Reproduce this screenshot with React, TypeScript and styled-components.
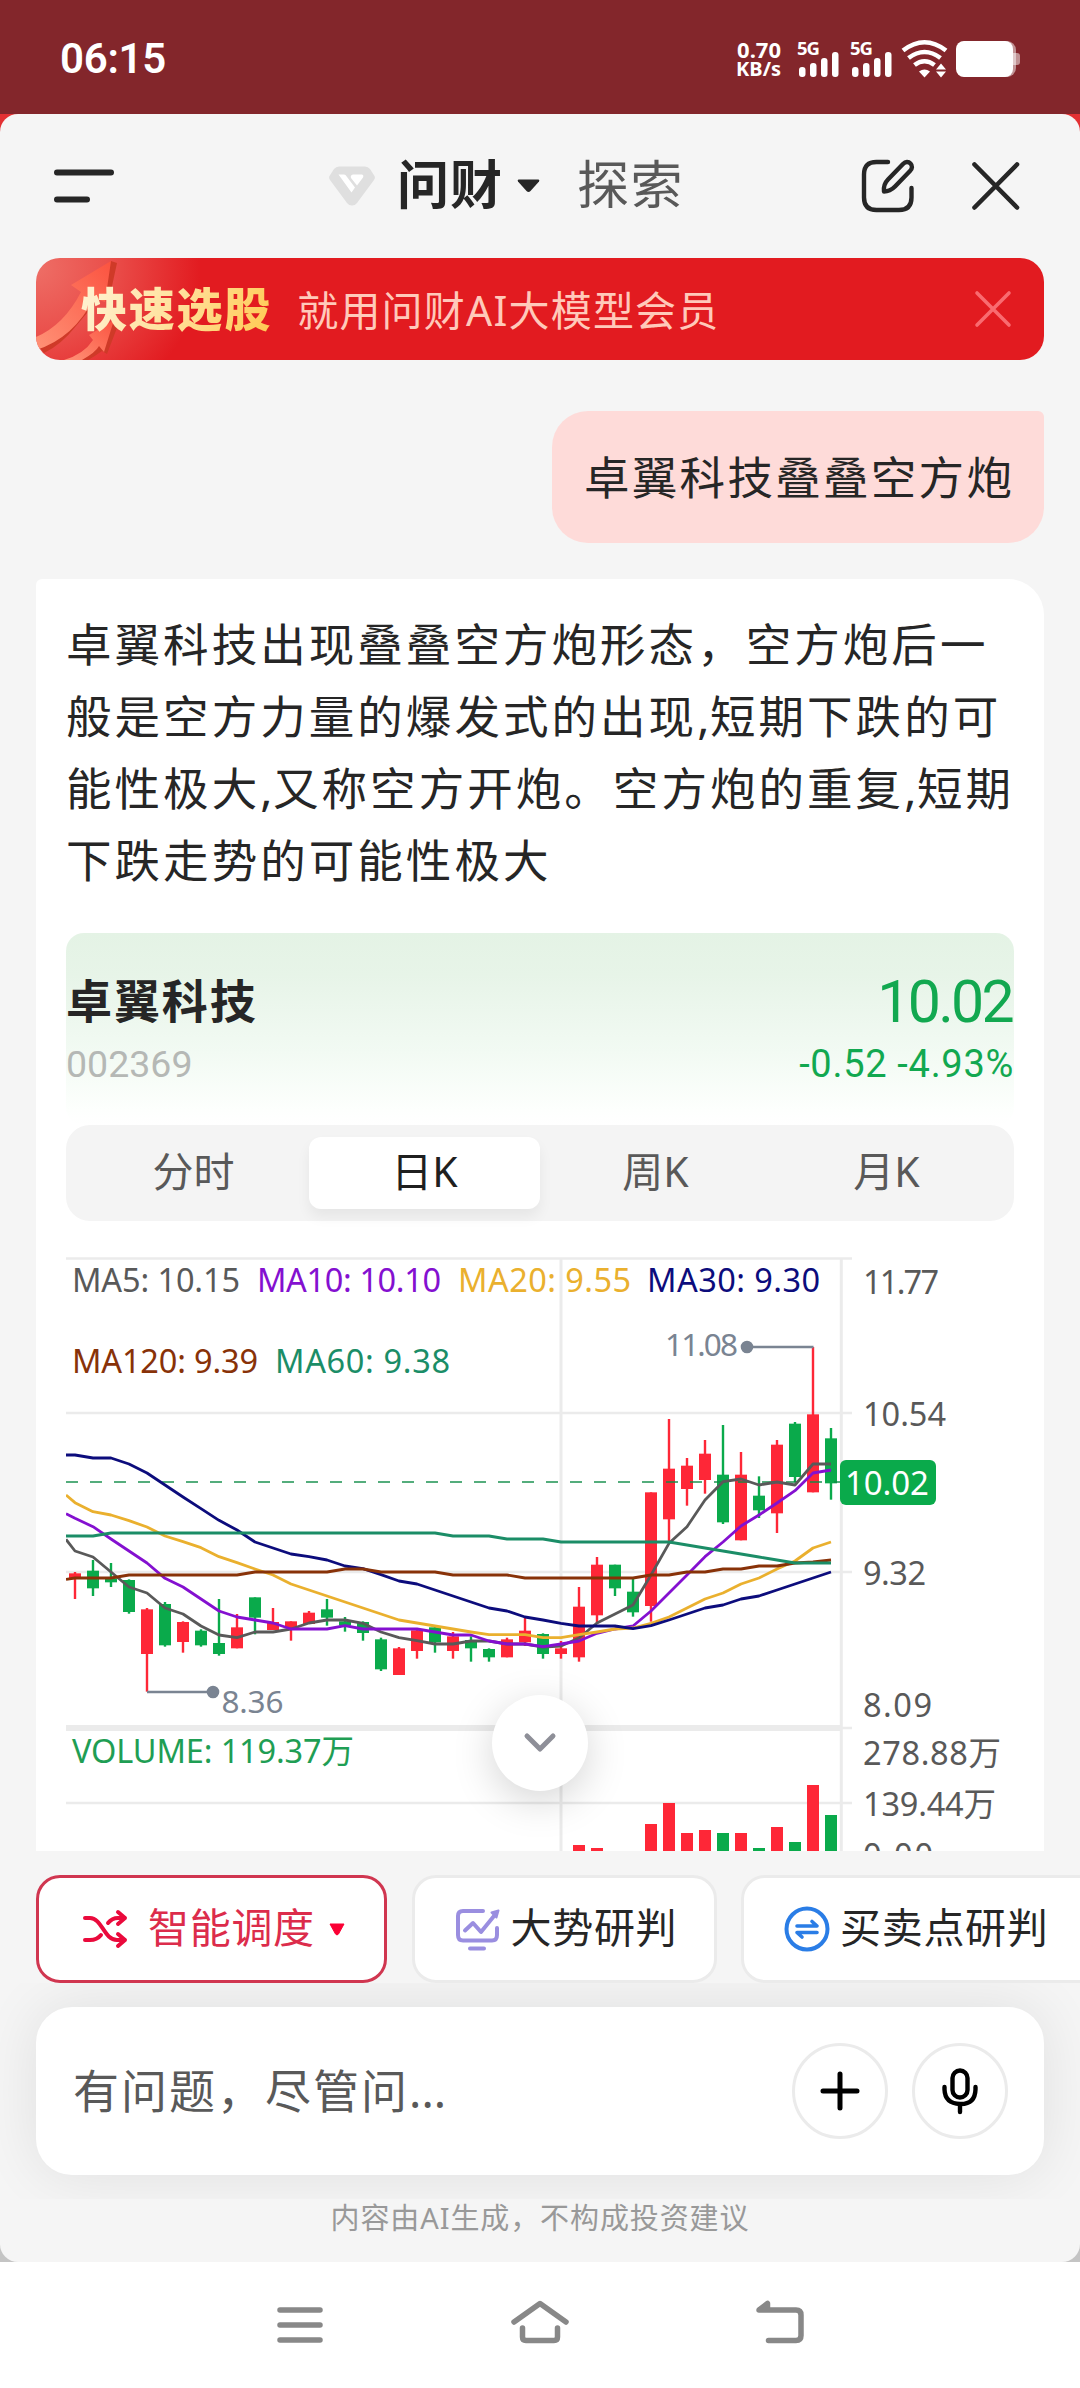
import React from "react";
import styled, { createGlobalStyle } from "styled-components";

const SANS = '"Noto Sans", "Noto Sans CJK SC", sans-serif';
const NUM = 'Roboto, "Noto Sans CJK SC", sans-serif';

const RED = "#fe2737";
const GREEN = "#0aaa4b";

const GlobalStyle = createGlobalStyle`
  * { box-sizing: border-box; }
  body { margin: 0; background: #fff; }
`;

const Screen = styled.div`
  width: 1080px;
  height: 2388px;
  display: flex;
  flex-direction: column;
  background: #fff;
  overflow: hidden;
  font-family: ${SANS};
  color: #262626;
  white-space: nowrap;
`;

/* ---------- status bar ---------- */

const StatusBar = styled.header`
  height: 114px;
  flex: none;
  display: flex;
  align-items: center;
  justify-content: space-between;
  padding: 4px 60px 0 60px;
  background: #83262b;
  color: #fff;
`;

const Clock = styled.span`
  font: 600 42px/42px ${NUM};
  letter-spacing: -0.3px;
`;

const StatusRight = styled.div`
  display: flex;
  align-items: center;
`;

const Speed = styled.div`
  display: flex;
  flex-direction: column;
  align-items: flex-end;
  margin-right: 16px;
  font: 700 20px/20px ${SANS};
  & > :first-child { font-size: 22px; }
`;

const StatusGlyphs = styled.svg`
  display: block;
  width: 223px;
  height: 56px;
`;

/* ---------- sheet ---------- */

const SheetBack = styled.div`
  flex: none;
  height: 2148px;
  background: linear-gradient(#e33033 0 50%, #c4c4c4 50%);
`;

const Sheet = styled.main`
  height: 2148px;
  display: flex;
  flex-direction: column;
  border-radius: 18px;
  background: #f5f5f5;
  overflow: hidden;
`;

const TopBar = styled.div`
  flex: none;
  height: 144px;
  display: flex;
  align-items: center;
  padding-left: 54px;
  svg { display: block; flex: none; }
`;

const TitleGroup = styled.div`
  display: flex;
  align-items: center;
  margin-left: 215px;
`;

const Title = styled.h1`
  margin: 0 14px 5px 22px;
  font-size: 52px;
  line-height: 72px;
  font-weight: 700;
  letter-spacing: 1px;
`;

const TitleAlt = styled.span`
  margin: 0 0 5px 37px;
  font-size: 52px;
  line-height: 72px;
  letter-spacing: 1.5px;
  color: #595959;
`;

const TopActions = styled.div`
  display: flex;
  align-items: center;
  gap: 57px;
  margin-left: auto;
  padding-right: 60px;
`;

const Banner = styled.section`
  flex: none;
  height: 102px;
  margin: 0 36px;
  position: relative;
  display: flex;
  align-items: center;
  border-radius: 24px;
  overflow: hidden;
  background: radial-gradient(ellipse 165px 150px at 0 10px, #ee6e66 0, #ea4f4b 45%, #e21b20 100%) #e21b20;
`;

const BannerArt = styled.svg`
  position: absolute;
  left: 0;
  top: 0;
`;

const BannerLead = styled.strong`
  position: relative;
  margin-left: 45px;
  padding-bottom: 2px;
  font-size: 46px;
  line-height: 66px;
  font-weight: 900;
  letter-spacing: 1.8px;
  background: linear-gradient(115deg, #fff0cc 10%, #ffe09a 50%, #ffca55 95%);
  background-clip: text;
  -webkit-background-clip: text;
  color: transparent;
`;

const BannerText = styled.span`
  margin-left: 25px;
  padding-bottom: 3px;
  font-size: 41px;
  letter-spacing: 1.2px;
  color: #ffc9ba;
`;

const BannerClose = styled.svg`
  display: block;
  margin-left: auto;
  margin-right: 31px;
`;

/* ---------- conversation ---------- */

const Question = styled.div`
  flex: none;
  align-self: flex-end;
  width: 492px;
  height: 132px;
  margin: 51px 36px 36px 0;
  padding: 0 0 5px 32px;
  display: flex;
  align-items: center;
  border-radius: 36px 6px 36px 36px;
  background: #fedbd9;
  font-size: 45.5px;
  letter-spacing: 2.3px;
`;

const Answer = styled.article`
  flex: none;
  height: 1272px;
  margin: 0 36px;
  padding: 29px 30px 0;
  position: relative;
  background: #fff;
  border-radius: 6px 36px 0 0;
`;

const AnswerText = styled.p`
  margin: 0 -30px 37px 0;
  font-size: 45.5px;
  line-height: 72px;
  letter-spacing: 3.05px;
`;

const Line = styled.span`
  display: block;
`;

const Comma = styled.span`
  letter-spacing: 0.6px;
`;

const QuoteHead = styled.div`
  height: 192px;
  display: flex;
  flex-direction: column;
  padding-top: 34px;
  border-radius: 18px;
  background: linear-gradient(#e4f3e5 0, #e7f4e8 22%, #f2faf3 62%, #fdfffd 92%, #fff 100%);
`;

const QuoteRow = styled.div<{ $h: number }>`
  display: flex;
  align-items: center;
  justify-content: space-between;
  height: ${(p) => p.$h}px;
`;

const StockName = styled.strong`
  font-size: 46px;
  line-height: 66px;
  letter-spacing: 1.9px;
`;

const Price = styled.span`
  font: 400 59px/66px ${NUM};
  letter-spacing: -2.7px;
  padding-top: 4px;
  margin-right: 2px;
  color: #12a850;
`;

const StockCode = styled.span`
  padding-top: 2px;
  font: 400 37.5px/54px ${NUM};
  color: #b5b8b5;
`;

const Change = styled.span`
  padding-top: 2px;
  font: 400 38px/54px ${NUM};
  letter-spacing: 0.7px;
  color: #12a850;
`;

const Tabs = styled.nav`
  height: 96px;
  padding: 12px;
  display: grid;
  grid-template-columns: repeat(4, 1fr);
  border-radius: 24px;
  background: #f4f4f4;
`;

const Tab = styled.button<{ $active?: boolean }>`
  border: 0;
  padding: 0 0 4px;
  border-radius: 12px;
  font: 400 41px/60px ${SANS};
  background: ${(p) => (p.$active ? "#fff" : "transparent")};
  color: ${(p) => (p.$active ? "#1f1f1f" : "#595959")};
  box-shadow: ${(p) => (p.$active ? "0 8px 14px rgba(0,0,0,.06)" : "none")};
`;

const Chart = styled.svg`
  display: block;
  width: 978px;
  height: 630px;
  font-family: ${SANS};
`;

const ScrollDown = styled.button`
  position: absolute;
  left: 456px;
  bottom: 60px;
  width: 96px;
  height: 96px;
  padding: 0;
  border: 0;
  border-radius: 50%;
  display: grid;
  place-items: center;
  background: #fff;
  box-shadow: 0 10px 40px rgba(0, 0, 0, 0.17);
`;

/* ---------- bottom ---------- */

const Chips = styled.div`
  flex: none;
  height: 132px;
  padding: 24px 0 0 36px;
  display: flex;
  gap: 24.5px;
`;

const Chip = styled.button<{ $w: number; $primary?: boolean }>`
  flex: none;
  width: ${(p) => p.$w}px;
  height: 108px;
  padding: 0 0 0 ${(p) => (p.$primary ? 43 : 40)}px;
  display: flex;
  align-items: center;
  border: 3px solid ${(p) => (p.$primary ? "#d03650" : "#ebebeb")};
  border-radius: 24px;
  background: #fff;
  color: ${(p) => (p.$primary ? "#dc2c4b" : "#262626")};
  font: 400 41px/60px ${SANS};
  letter-spacing: 0.7px;
  svg { display: block; flex: none; }
`;

const ChipLabel = styled.span<{ $gap: number }>`
  margin: 0 14px 4px ${(p) => p.$gap}px;
`;

const InputZone = styled.div`
  flex: none;
  height: 216px;
  padding: 24px 36px;
  overflow: hidden;
`;

const InputBox = styled.div`
  height: 168px;
  padding: 0 36px 0 37px;
  display: flex;
  align-items: center;
  gap: 24px;
  border-radius: 36px;
  background: #fff;
  box-shadow: 0 0 60px rgba(0, 0, 0, 0.09);
`;

const Placeholder = styled.span`
  flex: 1;
  padding-bottom: 7px;
  font-size: 46px;
  letter-spacing: 2px;
  color: #595959;
`;

const Dots = styled.span`
  letter-spacing: 0.1px;
`;

const RoundButton = styled.button`
  width: 96px;
  height: 96px;
  padding: 0;
  display: grid;
  place-items: center;
  border: 3px solid #ebebeb;
  border-radius: 50%;
  background: #fff;
`;

const Disclaimer = styled.p`
  margin: 1px 0 0;
  height: 36px;
  text-align: center;
  font-size: 29px;
  line-height: 36px;
  letter-spacing: 0.9px;
  color: #999;
`;

const SystemNav = styled.footer`
  flex: none;
  height: 126px;
  display: flex;
  justify-content: center;
  gap: 180px;
  padding-top: 30px;
  svg { display: block; }
`;

/* ---------- chart data ---------- */

// Each candle: rising?, high, body top, body bottom, low (in thirds of a pixel below y = 1500)
type Candle = [0 | 1, number, number, number, number];
const candles: Candle[] = [
  [1, 216, 220, 235, 297], [0, 180, 212, 265, 288], [0, 189, 235, 247, 261], [0, 238, 240, 336, 341],
  [1, 324, 328, 462, 575], [0, 306, 312, 436, 440], [1, 364, 366, 426, 458], [0, 388, 392, 436, 440],
  [0, 297, 429, 462, 467], [1, 342, 382, 445, 445], [0, 292, 292, 353, 403], [1, 324, 366, 390, 390],
  [1, 364, 364, 384, 422], [1, 333, 338, 372, 372], [0, 297, 328, 353, 377], [0, 351, 364, 377, 395],
  [0, 364, 366, 399, 422], [0, 413, 418, 508, 513], [1, 441, 445, 525, 525], [1, 385, 391, 453, 476],
  [0, 380, 382, 427, 458], [1, 396, 409, 453, 476], [0, 409, 420, 445, 485], [0, 445, 447, 472, 485],
  [1, 413, 418, 472, 472], [1, 351, 392, 427, 438], [0, 400, 402, 462, 476], [1, 423, 445, 462, 476],
  [1, 261, 320, 472, 485], [1, 171, 194, 346, 370], [0, 194, 194, 265, 288], [0, 236, 275, 337, 350],
  [1, -23, -23, 318, 365], [1, -243, -94, 58, 125], [1, -126, -103, -33, 17], [1, -180, -139, -60, -19],
  [0, -225, -76, 67, 72], [1, -144, -76, 121, 121], [0, -71, -13, 31, 54], [1, -180, -166, 40, 99],
  [0, -234, -229, -69, -53], [1, -459, -257, -23, -23], [0, -216, -185, -50, -1],
];

// The first value of every average sits on the left edge, the rest on the candles.
const rep = (v: number, n: number): number[] => Array(n).fill(v);
const averages: { color: string; values: number[] }[] = [
  {
    color: "#595959",
    values: [118, 153, 171, 216, 261, 279, 324, 342, 378, 405, 413, 396, 396, 387, 369, 360, 360, 370, 396, 413, 422,
      432, 432, 423, 423, 432, 432, 441, 438, 414, 369, 342, 315, 225, 130, 80, 0, -55, -63, -45, -54, -45, -108, -108],
  },
  {
    color: "#8410d0",
    values: [41, 55, 80, 117, 153, 189, 235, 261, 297, 333, 351, 360, 369, 387, 387, 387, 377, 387, 387, 387, 387, 396,
      405, 405, 423, 432, 432, 440, 432, 423, 400, 387, 378, 333, 279, 225, 170, 126, 78, 45, 9, -28, -81, -90],
  },
  {
    color: "#eab02e",
    values: [-15, 8, 35, 45, 62, 81, 108, 125, 143, 170, 188, 207, 225, 252, 270, 288, 306, 324, 342, 360, 369, 378,
      387, 396, 404, 404, 404, 413, 413, 404, 396, 387, 384, 370, 351, 324, 297, 279, 252, 234, 207, 183, 144, 126],
  },
  {
    color: "#0c0c7c",
    values: [-135, -135, -126, -126, -108, -81, -45, -9, 26, 61, 90, 126, 144, 162, 170, 180, 198, 206, 224, 243, 252,
      270, 288, 306, 324, 333, 351, 360, 370, 378, 378, 378, 386, 377, 360, 342, 324, 315, 297, 288, 270, 252, 234, 216],
  },
  {
    color: "#883208",
    values: [238, ...rep(234, 3), ...rep(225, 7), ...rep(216, 5), 207, 207, ...rep(216, 4), ...rep(225, 4),
      ...rep(234, 7), 225, 225, 216, 216, 207, 207, 198, 198, 189, 186, 180],
  },
  {
    color: "#1b8d67",
    values: [108, 108, 108, ...rep(99, 19), 108, 108, 108, 117, 117, 117, ...rep(126, 7), 135, 144, 153, 162, 171, 180,
      189, 189, 189],
  },
];

const volumes: [number, 0 | 1, number][] = [
  [28, 1, 1845], [29, 1, 1848], [32, 1, 1824], [33, 1, 1803], [34, 1, 1833], [35, 1, 1830], [36, 0, 1833],
  [37, 1, 1833], [38, 0, 1848], [39, 1, 1827], [40, 0, 1842], [41, 1, 1785], [42, 0, 1815],
];

// text, x, baseline, width, colour
type Label = [string, number, number, number, string];
const labels: Label[] = [
  ["MA5: 10.15", 72, 1292, 168, "#595959"],
  ["MA10: 10.10", 257, 1292, 184, "#8410d0"],
  ["MA20: 9.55", 458, 1292, 173, "#eab02e"],
  ["MA30: 9.30", 647, 1292, 173, "#0c0c7c"],
  ["MA120: 9.39", 72, 1373, 186, "#883208"],
  ["MA60: 9.38", 275, 1373, 175, "#1b8d67"],
  ["VOLUME: 119.37万", 72, 1763, 282, "#1f9e54"],
  ["11.77", 863, 1294, 76, "#595959"],
  ["10.54", 863, 1426, 83, "#595959"],
  ["9.32", 863, 1585, 63, "#595959"],
  ["8.09", 863, 1717, 69, "#595959"],
  ["278.88万", 863, 1765, 138, "#595959"],
  ["139.44万", 863, 1816, 133, "#595959"],
  ["0.00", 863, 1867, 70, "#595959"],
  ["11.08", 665, 1356, 73, "#7a8492"],
  ["8.36", 221.5, 1713, 62, "#7a8492"],
];

const cx = (i: number) => 75 + 18 * i;
const cy = (v: number) => 1500 + v / 3;
const tone = (up: 0 | 1) => (up ? RED : GREEN);

function KLineChart() {
  return (
    <Chart viewBox="66 1221 978 630">
      <g stroke="#ebebeb" strokeWidth="3" fill="none">
        <path d="M66 1258.5H852M66 1413H852M66 1572H852M841 1728H852M66 1803H852" strokeWidth="2.6" />
        <path d="M66 1728H841" strokeWidth="6" />
        <path d="M561 1258V1851M841.3 1258V1851" />
      </g>
      {candles.map(([up, hi, top, bottom, lo], i) => (
        <g key={i} fill={tone(up)}>
          <rect x={cx(i) - 1.2} y={cy(hi)} width={2.4} height={(lo - hi) / 3} />
          <rect x={cx(i) - 6} y={cy(top)} width={12} height={(bottom - top) / 3} />
        </g>
      ))}
      {volumes.map(([i, up, top]) => (
        <rect key={i} x={cx(i) - 6} y={top} width={12} height={1851 - top} fill={tone(up)} />
      ))}
      <path d="M66 1482H841" stroke="#0b8a45" strokeOpacity=".7" strokeWidth="2" strokeDasharray="12 12" />
      {averages.map(({ color, values }) => (
        <polyline
          key={color}
          fill="none"
          stroke={color}
          strokeWidth="2.8"
          strokeLinejoin="round"
          points={values.map((v, k) => `${k === 0 ? 66 : cx(k - 1)},${cy(v)}`).join(" ")}
        />
      ))}
      <g stroke="#7a8492" strokeWidth="2.6" fill="#7a8492">
        <path d="M747 1347H813.5M147 1692H213" />
        <circle cx="747" cy="1347" r="5" />
        <circle cx="213" cy="1692" r="5" />
      </g>
      <rect x="840" y="1460" width="96" height="45" rx="6" fill={GREEN} />
      <text x="845" y="1495" fontSize="33" textLength="84" fill="#fff">10.02</text>
      {labels.map(([text, x, y, w, fill]) => (
        <text key={text} x={x} y={y} fontSize={fill === "#7a8492" ? 31.5 : 32.5} textLength={w} fill={fill}>
          {text}
        </text>
      ))}
    </Chart>
  );
}

function StatusIcons() {
  const bars = (x: number) => (
    <g>
      <rect x={x + 2} y="28" width="6.5" height="10" rx="3" />
      <rect x={x + 13} y="24" width="6.5" height="14" rx="3" />
      <rect x={x + 24} y="19" width="6.5" height="19" rx="3" />
      <rect x={x + 35} y="13" width="6.5" height="25" rx="3" />
      <text x={x} y="16" fontSize="18.5" fontWeight="700" textLength="23" fontFamily={SANS}>5G</text>
    </g>
  );
  return (
    <StatusGlyphs viewBox="0 -8 223 56" fill="#fff">
      {bars(0)}
      {bars(53)}
      <g fill="none" stroke="#fff" strokeWidth="4.6">
        <path d="M106 11.5Q127.500 -5 149 11.5" />
        <path d="M111.500 19Q127.500 7 143.500 19" />
        <path d="M117.500 26Q127.500 18.500 137.500 26" />
      </g>
      <path d="M122 32.500Q127.500 28.500 133 32.500L127.500 38.500Z" />
      <path d="M139 30.500L144 24.500L149 30.500ZM139 32.500H149L144 38.500Z" />
      <rect x="213" y="14" width="10" height="12" rx="3" fillOpacity=".5" />
      <rect x="160" y="2" width="59" height="36" rx="9" fillOpacity=".5" />
      <rect x="159" y="2" width="57" height="36" rx="8" />
    </StatusGlyphs>
  );
}

export default function App() {
  return (
    <>
      <GlobalStyle />
      <Screen>
        <StatusBar>
          <Clock>06:15</Clock>
          <StatusRight>
            <Speed>
              <span>0.70</span>
              <span>KB/s</span>
            </Speed>
            <StatusIcons />
          </StatusRight>
        </StatusBar>
        <SheetBack>
          <Sheet>
            <TopBar>
              <svg width="60" height="36" viewBox="0 0 60 36" stroke="#262626" strokeWidth="6" strokeLinecap="round">
                <path d="M3 4.500H57M3 31.500H33" />
              </svg>
              <TitleGroup>
                <svg width="46" height="40" viewBox="0 0 46 40">
                  <path d="M10 0.500H36Q39 .5 41 3L45.500 10Q46.500 12 45 14L28 37Q26 39.500 23 39.500T18 37L1 14Q-.5 12 .5 10L5 3Q7 .5 10 .5Z" fill="#dfdfdf" />
                  <path d="M9.500 8.500H15Q16 8.500 16.500 9L26 21.500L22.500 26.500ZM24 8.500H33Q35 9 34 11.500L28 19.500L22 12Q21 9 24 8.500Z" fill="#fff" />
                </svg>
                <Title>问财</Title>
                <svg width="23" height="14" viewBox="0 0 23 14">
                  <path d="M1.500 .5H21.500Q23 1 22 2.500L13.500 12Q11.500 14 9.500 12L1 2.500Q0 1 1.500 .5Z" fill="#262626" />
                </svg>
                <TitleAlt>探索</TitleAlt>
              </TitleGroup>
              <TopActions>
                <svg width="54" height="54" viewBox="0 0 54 54" fill="none" stroke="#262626" strokeWidth="4.4" strokeLinecap="round">
                  <path d="M27 3H15.500Q3 3 3 15.500V38.500Q3 51 15.500 51H38Q50.500 51 50.500 38.500V29" />
                  <path d="M23 32.500C22.500 28 24 23.500 27 20.500L42 5C44.500 2.500 47.500 2.500 49.500 4.500S51.500 9.500 49 12L34 27.500C31 30.500 27.500 32.500 23 32.500Z" strokeLinejoin="round" />
                </svg>
                <svg width="48" height="48" viewBox="0 0 48 48" stroke="#262626" strokeWidth="4.6" strokeLinecap="round">
                  <path d="M2.500 2.500L45 45.500M45 2.500L2.500 45.500" />
                </svg>
              </TopActions>
            </TopBar>

            <Banner>
              <BannerArt width="100" height="102" viewBox="0 0 100 102">
                <defs>
                  <linearGradient id="arrow" x1="0" y1="1" x2="1" y2="0">
                    <stop offset="0" stopColor="#ff9277" />
                    <stop offset="1" stopColor="#fb5340" />
                  </linearGradient>
                </defs>
                <path d="M75 3L81 5L73 42L62 42L40 68Q25 87 8 95L4 90Z" fill="#cf3a28" />
                <path d="M75 3L35 27L45 34Q28 67 0 79V92Q38 80 58 40L69 44Z" fill="url(#arrow)" />
                <path d="M78 62L84 62L71 96L66 93Q55 101 48 104L42 102Z" fill="#cf3a28" />
                <path d="M78 62L53 77L57 82Q48 96 28 102H46Q60 94 63 88L68 94Z" fill="url(#arrow)" />
              </BannerArt>
              <BannerLead>快速选股</BannerLead>
              <BannerText>就用问财AI大模型会员</BannerText>
              <BannerClose width="40" height="40" viewBox="0 0 40 40" stroke="#f96b70" strokeWidth="3.6" strokeLinecap="round">
                <path d="M4 4L36 36M36 4L4 36" />
              </BannerClose>
            </Banner>

            <Question>卓翼科技叠叠空方炮</Question>

            <Answer>
              <AnswerText>
                <Line>卓翼科技出现叠叠空方炮形态，空方炮后一</Line>
                <Line>般是空方力量的爆发式的出现<Comma>,</Comma>短期下跌的可</Line>
                <Line>能性极大<Comma>,</Comma>又称空方开炮。空方炮的重复<Comma>,</Comma>短期</Line>
                <Line>下跌走势的可能性极大</Line>
              </AnswerText>
              <QuoteHead>
                <QuoteRow $h={66}>
                  <StockName>卓翼科技</StockName>
                  <Price>10.02</Price>
                </QuoteRow>
                <QuoteRow $h={60}>
                  <StockCode>002369</StockCode>
                  <Change>-0.52 -4.93%</Change>
                </QuoteRow>
              </QuoteHead>
              <Tabs>
                <Tab>分时</Tab>
                <Tab $active>日K</Tab>
                <Tab>周K</Tab>
                <Tab>月K</Tab>
              </Tabs>
              <KLineChart />
              <ScrollDown aria-label="down">
                <svg width="36" height="22" viewBox="0 0 36 22" fill="none" stroke="#8e8f98" strokeWidth="5" strokeLinecap="round" strokeLinejoin="round">
                  <path d="M5 4L18 17L31 4" />
                </svg>
              </ScrollDown>
            </Answer>

            <Chips>
              <Chip $w={351} $primary>
                <svg width="46" height="42" viewBox="0 0 46 42" fill="none" stroke="#ea0a3c" strokeWidth="4" strokeLinecap="round" strokeLinejoin="round">
                  <path d="M3 10H8C20 10 22 32 35 32H43M3 32H8Q15 32 19 27M26 15Q30 10 36 10H43M36 4L43 10L36 16M36 26L43 32L36 38" />
                </svg>
                <ChipLabel $gap={20}>智能调度</ChipLabel>
                <svg width="16" height="13" viewBox="0 0 16 13"><path d="M1 1H15L9.500 11Q8 13 6.500 11Z" fill="#fb0034" stroke="#fb0034" strokeLinejoin="round" /></svg>
              </Chip>
              <Chip $w={305}>
                <svg width="46" height="44" viewBox="0 0 46 44" fill="none" stroke="#9a8ee0" strokeWidth="4" strokeLinecap="round" strokeLinejoin="round">
                  <path d="M28 4H8Q3 4 3 9V28Q3 33.500 8 33.500H37Q42 33.500 42 28V21M15 41.500H29M10 23.500L18 16L26 25L39 9" />
                  <path d="M43.500 3.500L36.500 5.500L41.500 10.500Z" fill="#9a8ee0" strokeWidth="2" />
                </svg>
                <ChipLabel $gap={10}>大势研判</ChipLabel>
              </Chip>
              <Chip $w={363}>
                <svg width="46" height="46" viewBox="0 0 46 46" fill="none" stroke="#2a7de6" strokeWidth="4" strokeLinecap="round" strokeLinejoin="round">
                  <circle cx="23" cy="23" r="20.500" />
                  <path d="M13 20H33L28 15.500M33 26.500H13L18 31" strokeWidth="3.600" />
                </svg>
                <ChipLabel $gap={10}>买卖点研判</ChipLabel>
              </Chip>
            </Chips>

            <InputZone>
              <InputBox>
                <Placeholder>有问题，尽管问<Dots>...</Dots></Placeholder>
                <RoundButton aria-label="add">
                  <svg width="40" height="40" viewBox="0 0 40 40" stroke="#000" strokeWidth="5" strokeLinecap="round">
                    <path d="M20 3V37M3 20H37" />
                  </svg>
                </RoundButton>
                <RoundButton aria-label="voice">
                  <svg width="40" height="48" viewBox="0 0 40 48" fill="none" stroke="#000" strokeWidth="4.400" strokeLinecap="round">
                    <rect x="12.500" y="3.500" width="15" height="27" rx="7.500" />
                    <path d="M4.500 20V22.500Q5 36.500 20 37T35.500 22.500V20M20 37V45" />
                  </svg>
                </RoundButton>
              </InputBox>
            </InputZone>
            <Disclaimer>内容由AI生成，不构成投资建议</Disclaimer>
          </Sheet>
        </SheetBack>

        <SystemNav>
          <svg width="60" height="60" viewBox="0 0 60 60" stroke="#888" strokeWidth="5.500" strokeLinecap="round">
            <path d="M10 18H50M10 33H50M10 48H50" />
          </svg>
          <svg width="60" height="60" viewBox="0 0 60 60" fill="none" stroke="#888" strokeWidth="5.500" strokeLinecap="round" strokeLinejoin="round">
            <path d="M4 30L30 11.500L56 30M12.500 36V45Q12.500 48.500 16 48.500H44Q47.500 48.500 47.500 45V36" />
          </svg>
          <svg width="60" height="60" viewBox="0 0 60 60" fill="none" stroke="#888" strokeWidth="5.500" strokeLinecap="round" strokeLinejoin="round">
            <path d="M18.500 48.500H46Q51 48.500 51 43.500V23Q51 18 46 18H9L17.500 11.500V18" />
          </svg>
        </SystemNav>
      </Screen>
    </>
  );
}
